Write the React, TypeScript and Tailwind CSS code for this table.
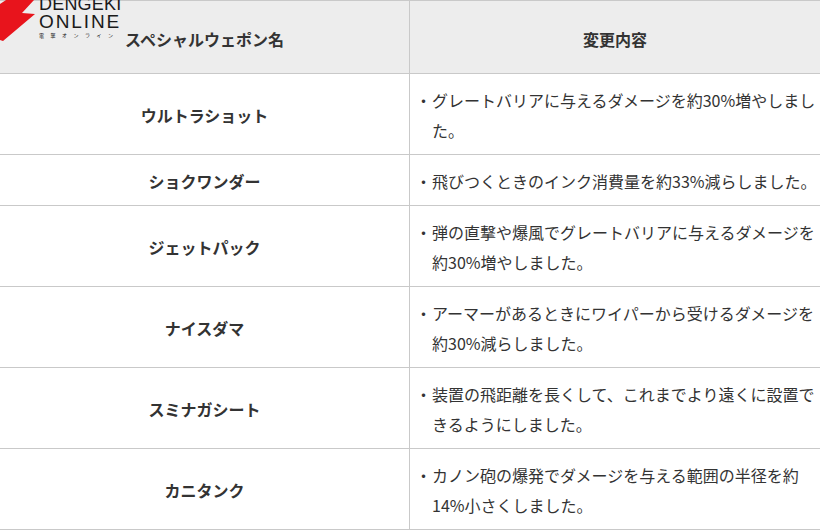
import * as React from 'react';

/**
 * Special weapon balance changes table, with the Dengeki Online logo
 * sitting over the top-left corner of the header.
 */

type Row = { name: string; change: string; lines: 1 | 2 };

const ROWS: Row[] = [
  { name: 'ウルトラショット', change: 'グレートバリアに与えるダメージを約30%増やしました。', lines: 2 },
  { name: 'ショクワンダー', change: '飛びつくときのインク消費量を約33%減らしました。', lines: 1 },
  { name: 'ジェットパック', change: '弾の直撃や爆風でグレートバリアに与えるダメージを約30%増やしました。', lines: 2 },
  { name: 'ナイスダマ', change: 'アーマーがあるときにワイパーから受けるダメージを約30%減らしました。', lines: 2 },
  { name: 'スミナガシート', change: '装置の飛距離を長くして、これまでより遠くに設置できるようにしました。', lines: 2 },
  { name: 'カニタンク', change: 'カノン砲の爆発でダメージを与える範囲の半径を約14%小さくしました。', lines: 2 },
];

const FONT = "font-['Noto_Sans_CJK_JP','Noto_Sans',sans-serif]";

function Logo() {
  return (
    <div className="absolute left-0 top-0 flex items-start">
      <svg width="36" height="41" viewBox="0 0 36 41" className="shrink-0">
        <polygon points="6,0 34,0 22,13 35,14 3,41 0,40 0,4" fill="#e8141c" />
      </svg>
      <div className="ml-[3px] flex flex-col font-['Liberation_Sans',Arial,sans-serif] leading-none text-[#1a1a1a]">
        <span className="-mt-[5px] h-[18px] text-[18px] tracking-[0.2px]">DENGEKI</span>
        <span className="-mt-[1px] h-[19px] text-[19px] tracking-[1.9px]">ONLINE</span>
        <span className={`mt-[1px] text-[5px] tracking-[6.5px] ${FONT}`}>電撃オンライン</span>
      </div>
    </div>
  );
}

export default function App() {
  return (
    <div className={`relative h-[530px] w-[820px] overflow-hidden bg-white text-[16px] text-[#333] ${FONT}`}>
      <div className="grid grid-cols-[410px_410px] border-t border-[#c9c9c9]">
        <div className="flex h-[73px] items-center justify-center border-b border-r border-[#c9c9c9] bg-[#ededed] pt-[3px] font-bold">
          スペシャルウェポン名
        </div>
        <div className="flex h-[73px] items-center justify-center border-b border-[#c9c9c9] bg-[#ededed] pt-[3px] font-bold">
          変更内容
        </div>

        {ROWS.map((row) => (
          <React.Fragment key={row.name}>
            <div
              className={`flex items-center justify-center border-b border-r border-[#c9c9c9] pt-[1px] font-bold ${
                row.lines === 2 ? 'h-[81px]' : 'h-[51px]'
              }`}
            >
              {row.name}
            </div>
            <div
              className={`flex border-b border-[#c9c9c9] pb-[9px] pl-[5px] pt-[11px] leading-[30px] ${
                row.lines === 2 ? 'h-[81px]' : 'h-[51px]'
              }`}
            >
              <span className="w-[17px] shrink-0 text-center">・</span>
              <span className="flex-1">{row.change}</span>
            </div>
          </React.Fragment>
        ))}
      </div>
      <Logo />
    </div>
  );
}
